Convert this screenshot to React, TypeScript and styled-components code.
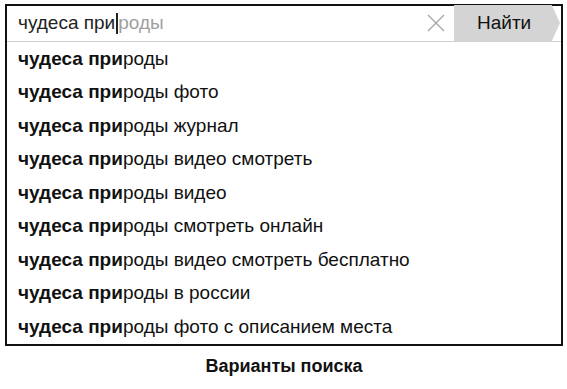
import React from "react";
import styled, { createGlobalStyle } from "styled-components";

const Global = createGlobalStyle`
  html, body { margin: 0; padding: 0; background: #fff; }
  body { font-family: "Liberation Sans", Arial, sans-serif; color: #111; }
`;

const Page = styled.div`
  width: 567px;
  height: 389px;
  padding: 4px 0 0 5px;
  box-sizing: border-box;
  display: flex;
  flex-direction: column;
`;

const Box = styled.div`
  width: 558px;
  height: 342px;
  box-sizing: border-box;
  border: 2px solid #111;
  display: flex;
  flex-direction: column;
  position: relative;
`;

const SearchBar = styled.div`
  height: 37px;
  margin-top: -1px;
  box-sizing: border-box;
  border-bottom: 1px solid #d0d0d0;
  display: flex;
  align-items: center;
`;

const InputText = styled.div`
  flex: 1;
  padding-left: 11px;
  font-size: 19px;
  display: flex;
  align-items: center;
  color: #222;
`;

const Caret = styled.span`
  display: inline-block;
  width: 2px;
  height: 21px;
  background: #222;
  margin: 0 0 0 1px;
`;

const Hint = styled.span`
  color: #a0a0a0;
`;

const Clear = styled.div`
  width: 20px;
  height: 20px;
  margin-right: 8px;
  display: flex;
  align-items: center;
  justify-content: center;
`;

const FindButton = styled.div`
  width: 106px;
  height: 37px;
  margin-right: 1px;
  background: #d4d4d4;
  clip-path: polygon(0 0, 92% 0, 100% 50%, 92% 100%, 0 100%);
  display: flex;
  align-items: center;
  padding-left: 23px;
  box-sizing: border-box;
  font-size: 19px;
  color: #111;
`;

const List = styled.div`
  flex: 1;
  display: flex;
  flex-direction: column;
`;

const Row = styled.div`
  height: 33.5px;
  display: flex;
  align-items: center;
  padding-left: 11px;
  font-size: 19px;
  white-space: pre;
`;

const Caption = styled.div`
  width: 558px;
  text-align: center;
  margin-top: 10px;
  font-size: 18px;
  font-weight: bold;
`;

const tails = [
  "роды",
  "роды фото",
  "роды журнал",
  "роды видео смотреть",
  "роды видео",
  "роды смотреть онлайн",
  "роды видео смотреть бесплатно",
  "роды в россии",
  "роды фото с описанием места",
];

export default function App() {
  return (
    <>
      <Global />
      <Page>
        <Box>
          <SearchBar>
            <InputText>
              чудеса при<Caret />
              <Hint>роды</Hint>
            </InputText>
            <Clear>
              <svg width="18" height="18" viewBox="0 0 18 18">
                <path d="M1 1 L17 17 M17 1 L1 17" stroke="#a8a8a8" strokeWidth="1.4" />
              </svg>
            </Clear>
            <FindButton>Найти</FindButton>
          </SearchBar>
          <List>
            {tails.map((t) => (
              <Row key={t}>
                <b>чудеса при</b>
                {t}
              </Row>
            ))}
          </List>
        </Box>
        <Caption>Варианты поиска</Caption>
      </Page>
    </>
  );
}
